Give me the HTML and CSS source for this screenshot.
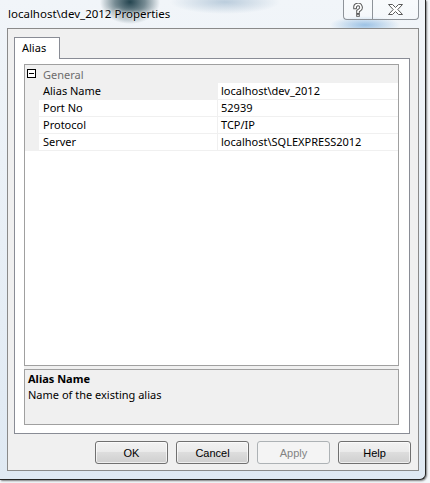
FILE: index.html
```html
<!DOCTYPE html>
<html>
<head>
<meta charset="utf-8">
<link rel="stylesheet" href="styles.css">
</head>
<body>
<div class="window">
  <div class="titlebar">
    <span class="title">localhost\dev_2012 Properties</span>
    <div class="caption">
      <div class="cbtn help">
        <svg width="12" height="14" viewBox="0 0 12 14">
          <path d="M3 4.5 A3 3 0 1 1 7.5 7 L6 8.2 V9.3" fill="none" stroke="#5a5a5a" stroke-width="3.6" stroke-linecap="square"/>
          <rect x="4.2" y="10.8" width="3.6" height="3" fill="#5a5a5a"/>
          <path d="M3 4.5 A3 3 0 1 1 7.5 7 L6 8.2 V9.3" fill="none" stroke="#fff" stroke-width="1.6" stroke-linecap="square"/>
          <rect x="5.2" y="11.8" width="1.6" height="1.1" fill="#fff"/>
        </svg>
      </div>
      <div class="cbtn close">
        <svg width="15" height="11" viewBox="0 0 15 11">
          <polygon points="0.5,0.5 4.5,0.5 7.5,3.5 10.5,0.5 14.5,0.5 9.8,5.5 14.5,10.5 10.5,10.5 7.5,7.5 4.5,10.5 0.5,10.5 5.2,5.5" fill="#fff" stroke="#5a5a5a" stroke-width="1"/>
        </svg>
      </div>
    </div>
  </div>
  <div class="client">
    <div class="tabs"><div class="tab">Alias</div></div>
    <div class="panel">
      <div class="pg">
        <div class="grid">
          <div class="row cat">
            <span class="gut"><span class="minus"></span></span>
            <span class="catname">General</span>
          </div>
          <div class="row sel">
            <span class="gut"></span>
            <span class="name">Alias Name</span>
            <span class="val">localhost\dev_2012</span>
          </div>
          <div class="row">
            <span class="gut"></span>
            <span class="name">Port No</span>
            <span class="val">52939</span>
          </div>
          <div class="row">
            <span class="gut"></span>
            <span class="name">Protocol</span>
            <span class="val">TCP/IP</span>
          </div>
          <div class="row">
            <span class="gut"></span>
            <span class="name">Server</span>
            <span class="val">localhost\SQLEXPRESS2012</span>
          </div>
        </div>
        <div class="desc">
          <div class="desc-title">Alias Name</div>
          <div class="desc-text">Name of the existing alias</div>
        </div>
      </div>
    </div>
    <div class="buttons">
      <div class="btn">OK</div>
      <div class="btn">Cancel</div>
      <div class="btn disabled">Apply</div>
      <div class="btn">Help</div>
    </div>
  </div>
</div>
</body>
</html>
```

FILE: styles.css
```css
* { box-sizing: border-box; }
html, body { margin: 0; padding: 0; }
body {
  width: 430px;
  height: 483px;
  overflow: hidden;
  background: #f4f7fa;
  font-family: "Noto Sans", sans-serif;
  font-size: 11px;
  line-height: 16px;
  color: #000;
}

.window {
  width: 426px;
  height: 480px;
  border-right: 1px solid #262626;
  border-bottom: 1px solid #262626;
  border-bottom-right-radius: 6px;
  box-shadow: 1px 1px 2px rgba(0,0,0,.5);
  display: flex;
  flex-direction: column;
  background-color: #e6eef5;
  background-image: linear-gradient(#f1f5f9, #dfe9f3);
}

.titlebar {
  flex: none;
  height: 28px;
  display: flex;
  justify-content: space-between;
  align-items: flex-start;
  background-image:
    radial-gradient(closest-side, #24444f, rgba(36,68,79,.6) 50%, rgba(36,68,79,0)),
    radial-gradient(closest-side, rgba(120,155,185,.45), rgba(120,155,185,0)),
    radial-gradient(closest-side, rgba(100,160,215,.6), rgba(100,160,215,0));
  background-repeat: no-repeat;
  background-position: 100px -20px, 170px -10px, 330px 16px;
  background-size: 60px 44px, 110px 24px, 70px 18px;
}
.title {
  padding: 6px 0 0 8px;
  font-size: 11.5px;
  line-height: 16px;
  position: relative;
  text-shadow: 0 0 4px rgba(255,255,255,.9), 0 0 2px #fff;
}
.caption {
  display: flex;
  margin-right: 6px;
}
.cbtn {
  height: 20px;
  border: 1px solid #8e9399;
  border-top: none;
  display: flex;
  align-items: center;
  justify-content: center;
  background: linear-gradient(rgba(255,255,255,.55), rgba(255,255,255,.25));
}
.cbtn.help {
  width: 29px;
  border-right: none;
  border-bottom-left-radius: 4px;
}
.cbtn.close {
  width: 47px;
  border-bottom-right-radius: 4px;
}

.client {
  margin-left: 7px;
  width: 412px;
  height: 443px;
  border: 1px solid #8a8a8a;
  background: #f0f0f0;
  display: flex;
  flex-direction: column;
}

.tabs {
  display: flex;
  padding: 8px 0 0 6px;
  margin-bottom: -1px;
  flex: none;
}
.tab {
  width: 46px;
  height: 22px;
  border: 1px solid #898c95;
  border-bottom: none;
  background: #fff;
  padding: 2px 0 0 7px;
  line-height: 15px;
  position: relative;
  z-index: 1;
}

.panel {
  margin-left: 6px;
  width: 396px;
  height: 376px;
  flex: none;
  border: 1px solid #898c95;
  background: #fff;
  padding: 5px 10px 8px 9px;
  display: flex;
  flex-direction: column;
}
.pg {
  flex: 1;
  display: flex;
  flex-direction: column;
  gap: 3px;
  background: #f0f0f0;
}
.grid {
  flex: 1;
  border: 1px solid #a0a0a0;
  background: #fff;
}
.row {
  display: grid;
  grid-template-columns: 14px 179px 1fr;
  height: 17px;
}
.gut {
  background: #f0f0f0;
}
.name {
  padding-left: 4px;
  border-right: 1px solid #f0f0f0;
  border-bottom: 1px solid #f0f0f0;
  white-space: nowrap;
}
.val {
  padding-left: 3px;
  border-bottom: 1px solid #f0f0f0;
  white-space: nowrap;
}
.row.sel .name {
  background: #f0f0f0;
}
.row.cat {
  height: 18px;
  background: #f0f0f0;
  display: flex;
  align-items: center;
}
.row.cat .gut {
  width: 14px;
  height: 18px;
  display: flex;
  align-items: center;
}
.minus {
  width: 9px;
  height: 9px;
  margin-left: 2px;
  margin-top: -1px;
  border: 1px solid #000;
  background: #fff;
  position: relative;
}
.minus::after {
  content: "";
  position: absolute;
  left: 1px;
  right: 1px;
  top: 3px;
  height: 1px;
  background: #000;
}
.catname {
  padding-left: 4px;
  color: #6d6d6d;
  padding-top: 1px;
}

.desc {
  flex: none;
  height: 56px;
  border: 1px solid #a0a0a0;
  background: #f0f0f0;
  padding: 1px 3px;
}
.desc-title {
  font-weight: 700;
}

.buttons {
  flex: none;
  display: flex;
  justify-content: flex-end;
  gap: 8px;
  padding-right: 7px;
  margin-top: 7px;
}
.btn {
  width: 73px;
  height: 23px;
  border: 1px solid #707070;
  border-radius: 3px;
  background: linear-gradient(#f2f2f2 0%, #ebebeb 45%, #dddddd 50%, #cfcfcf 100%);
  box-shadow: inset 0 0 0 1px rgba(255,255,255,.65);
  font-family: "Liberation Sans", Arial, sans-serif;
  font-size: 11px;
  display: flex;
  align-items: center;
  justify-content: center;
}
.btn.disabled {
  border-color: #adb2b5;
  background: #f4f4f4;
  box-shadow: none;
  color: #838383;
}
```
